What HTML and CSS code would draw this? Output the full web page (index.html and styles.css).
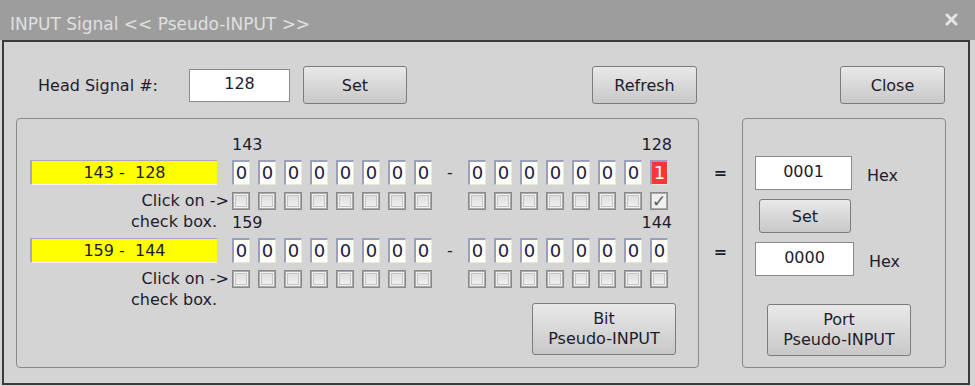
FILE: index.html
```html
<!DOCTYPE html>
<html lang="en">
<head>
  <meta charset="UTF-8">
  <title>INPUT Signal</title>
  <link rel="stylesheet" href="styles.css">
</head>
<body>

  <div class="window">
    <div class="titlebar">
      <span class="title">INPUT Signal &lt;&lt; Pseudo-INPUT &gt;&gt;</span>
      <svg class="close-x" width="13" height="13" viewBox="0 0 13 13">
        <path d="M2 2 L11 11 M11 2 L2 11" stroke="#e4e4e4" stroke-width="3" stroke-linecap="round"/>
      </svg>
    </div>

    <div class="frame">
      <!-- Top controls -->
      <div class="toprow">
        <span class="head-label">Head Signal #:</span>
        <div class="field head-field">128</div>
        <button class="btn btn-set">Set</button>
        <button class="btn btn-refresh">Refresh</button>
        <button class="btn btn-close">Close</button>
      </div>

      <div class="groups">
        <!-- Bit panel -->
        <div class="group bit-group">

          <div class="bank">
            <div class="bank-nums"><span>143</span><span>128</span></div>
            <div class="bank-row">
              <div class="range">143 -&nbsp; 128</div>
              <div class="bits">
                <span class="cell">0</span><span class="cell">0</span><span class="cell">0</span><span class="cell">0</span>
                <span class="cell">0</span><span class="cell">0</span><span class="cell">0</span><span class="cell">0</span>
              </div>
              <span class="dash">-</span>
              <div class="bits">
                <span class="cell">0</span><span class="cell">0</span><span class="cell">0</span><span class="cell">0</span>
                <span class="cell">0</span><span class="cell">0</span><span class="cell">0</span><span class="cell on">1</span>
              </div>
            </div>
            <div class="check-row">
              <div class="hint"><span class="hint-a">Click on -&gt;</span><span class="hint-b">check box.</span></div>
              <div class="bits">
                <span class="chk"></span><span class="chk"></span><span class="chk"></span><span class="chk"></span>
                <span class="chk"></span><span class="chk"></span><span class="chk"></span><span class="chk"></span>
              </div>
              <span class="dash"></span>
              <div class="bits">
                <span class="chk"></span><span class="chk"></span><span class="chk"></span><span class="chk"></span>
                <span class="chk"></span><span class="chk"></span><span class="chk"></span><span class="chk checked">✓</span>
              </div>
            </div>
          </div>

          <div class="bank">
            <div class="bank-nums"><span>159</span><span>144</span></div>
            <div class="bank-row">
              <div class="range">159 -&nbsp; 144</div>
              <div class="bits">
                <span class="cell">0</span><span class="cell">0</span><span class="cell">0</span><span class="cell">0</span>
                <span class="cell">0</span><span class="cell">0</span><span class="cell">0</span><span class="cell">0</span>
              </div>
              <span class="dash">-</span>
              <div class="bits">
                <span class="cell">0</span><span class="cell">0</span><span class="cell">0</span><span class="cell">0</span>
                <span class="cell">0</span><span class="cell">0</span><span class="cell">0</span><span class="cell">0</span>
              </div>
            </div>
            <div class="check-row">
              <div class="hint"><span class="hint-a">Click on -&gt;</span><span class="hint-b">check box.</span></div>
              <div class="bits">
                <span class="chk"></span><span class="chk"></span><span class="chk"></span><span class="chk"></span>
                <span class="chk"></span><span class="chk"></span><span class="chk"></span><span class="chk"></span>
              </div>
              <span class="dash"></span>
              <div class="bits">
                <span class="chk"></span><span class="chk"></span><span class="chk"></span><span class="chk"></span>
                <span class="chk"></span><span class="chk"></span><span class="chk"></span><span class="chk"></span>
              </div>
            </div>
          </div>

          <button class="btn btn-big btn-bit">Bit<br>Pseudo-INPUT</button>
        </div>

        <!-- Equals column -->
        <div class="equals">
          <span>=</span>
          <span>=</span>
        </div>

        <!-- Port panel -->
        <div class="group port-group">
          <div class="hex-row">
            <div class="field hex-field">0001</div>
            <span class="hex-label">Hex</span>
          </div>
          <button class="btn btn-hexset">Set</button>
          <div class="hex-row hex-row2">
            <div class="field hex-field wide">0000</div>
            <span class="hex-label">Hex</span>
          </div>
          <button class="btn btn-big btn-port">Port<br>Pseudo-INPUT</button>
        </div>
      </div>
    </div>
  </div>

</body>
</html>
```

FILE: styles.css
```css
* {
  box-sizing: border-box;
}

body {
  margin: 0;
  background-color: #d4d4d4;
  font-family: "DejaVu Sans", sans-serif;
  font-size: 16px;
  color: #1c1c2e;
}

.window {
  width: 975px;
  height: 386px;
  background-color: #d4d4d4;
}

.titlebar {
  height: 40px;
  background-color: #9d9d9d;
  color: #e0e0e0;
  font-size: 17px;
  display: flex;
  align-items: center;
  justify-content: space-between;
  padding: 8px 17px 0 10px;
}

.close-x {
  margin-top: -10px;
}

.frame {
  margin-left: 2px;
  width: 968px;
  height: 345px;
  border: 2px solid #3a3a3a;
  padding: 24px 0 0 12px;
}

/* top row */
.toprow {
  display: flex;
  align-items: center;
  height: 38px;
}

.head-label {
  width: 173px;
  padding-left: 22px;
}

.field {
  background-color: #fff;
  border: 1px solid #8a8a8a;
  text-align: center;
  line-height: 28px;
}

.head-field {
  width: 101px;
  height: 33px;
}

.btn {
  font-family: "DejaVu Sans", sans-serif;
  font-size: 16px;
  color: #1c1c2e;
  background: linear-gradient(#e9e9e9, #c8c8c8);
  border: 1px solid #7c7c7c;
  border-radius: 3px;
  height: 38px;
  padding: 0;
  cursor: pointer;
}

.btn-set {
  width: 104px;
  margin-left: 13px;
}

.btn-refresh {
  width: 105px;
  margin-left: 185px;
}

.btn-close {
  width: 105px;
  margin-left: 143px;
}

.btn-big {
  height: 52px;
  width: 144px;
  line-height: 20px;
}

/* groups */
.groups {
  display: flex;
  margin-top: 14px;
}

.group {
  border: 1px solid #8a8a8a;
  border-radius: 4px;
  height: 250px;
}

.bit-group {
  width: 683px;
  padding: 16px 0 0 13px;
  display: flex;
  flex-direction: column;
}

.bank + .bank {
  margin-top: 4px;
}

.bank-nums {
  height: 20px;
  width: 440px;
  margin-left: 202px;
  display: flex;
  justify-content: space-between;
  line-height: 20px;
}

.bank-row {
  display: flex;
  align-items: center;
  height: 25px;
  margin-top: 5px;
}

.range {
  width: 187px;
  height: 25px;
  margin-right: 15px;
  background-color: #ffff00;
  border-top: 1px solid #a4a8c4;
  border-left: 2px solid #a4a8c4;
  border-bottom: 1px solid #f4f4f4;
  text-align: center;
  line-height: 23px;
}

.bits {
  display: flex;
  gap: 8px;
}

.cell {
  width: 18px;
  height: 25px;
  background-color: #fffff6;
  border-top: 2px solid #98a0bc;
  border-left: 2px solid #98a0bc;
  border-right: 1px solid #e8e8de;
  border-bottom: 1px solid #e8e8de;
  font-size: 18px;
  line-height: 21px;
  text-align: center;
  color: #1e1a4c;
}

.cell.on {
  background-color: #ff3434;
  color: #fff;
}

.dash {
  width: 36px;
  text-align: center;
}

.check-row {
  display: flex;
  align-items: flex-start;
  height: 17px;
  margin-top: 7px;
}

.hint {
  width: 202px;
  height: 17px;
  margin-top: -2px;
  line-height: 21px;
  text-align: right;
  white-space: nowrap;
}

.hint span {
  display: block;
}

.hint-a {
  padding-right: 3px;
}

.hint-b {
  padding-right: 15px;
}

.chk {
  width: 18px;
  height: 18px;
  border: 1px solid #8a8a8a;
  background: linear-gradient(#dadada, #f4f4f4);
  box-shadow: inset 0 0 0 1px #a8a8a8, inset 0 0 0 2px #f2f2f2, inset 0 0 0 3px #c4c4c4;
  font-size: 17px;
  font-weight: bold;
  line-height: 16px;
  text-align: center;
  color: #5a5a5a;
}

.chk.checked {
  background: #efefef;
  box-shadow: inset 0 0 0 1px #a8a8a8;
}

.btn-bit {
  align-self: flex-end;
  margin-top: 16px;
  margin-right: 22px;
}

/* equals column */
.equals {
  width: 43px;
  display: flex;
  flex-direction: column;
  align-items: center;
  padding-top: 45px;
  font-weight: bold;
  line-height: 20px;
  gap: 59px;
}

/* port panel */
.port-group {
  width: 204px;
  padding: 37px 0 0 12px;
}

.hex-row {
  display: flex;
  align-items: center;
}

.hex-field {
  width: 97px;
  height: 34px;
  line-height: 30px;
}

.hex-field.wide {
  width: 99px;
}

.hex-label {
  margin-left: 15px;
  margin-top: 4px;
}

.btn-hexset {
  display: block;
  width: 92px;
  height: 34px;
  margin: 9px 0 0 4px;
}

.hex-row2 {
  margin-top: 9px;
}

.btn-port {
  display: block;
  margin: 28px 0 0 12px;
}
```
